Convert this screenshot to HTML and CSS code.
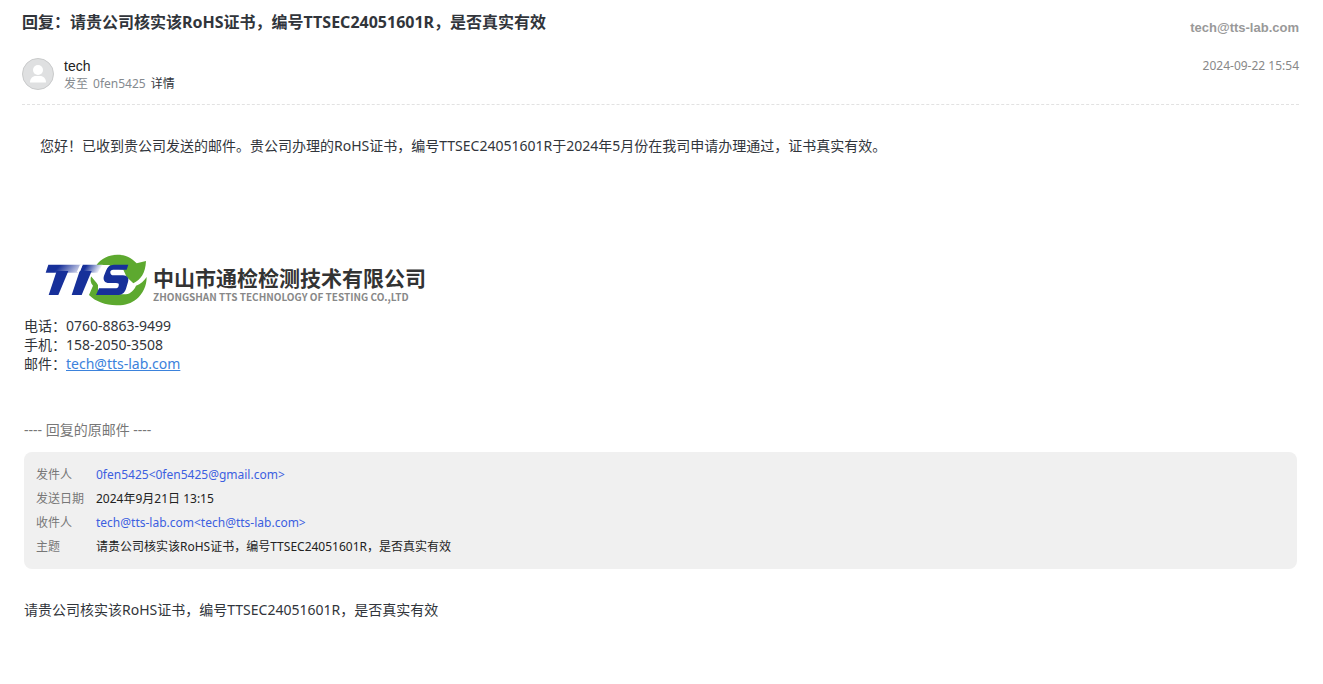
FILE: index.html
```html
<!DOCTYPE html>
<html lang="zh-CN">
<head>
    <meta charset="utf-8">
    <title>回复：请贵公司核实该RoHS证书</title>
    <link rel="stylesheet" href="styles.css">
</head>
<body>
    <!-- 邮件头 -->
    <header class="mail-header">
        <div class="title-row">
            <h1 class="subject">回复：请贵公司核实该RoHS证书，编号TTSEC24051601R，是否真实有效</h1>
            <span class="account">tech@tts-lab.com</span>
        </div>
        <div class="sender-row">
            <svg class="avatar" viewBox="0 0 32 32" aria-hidden="true">
                <circle cx="16" cy="16" r="15.5" fill="#dfe0e1" stroke="#c9cacb"/>
                <circle cx="16" cy="12" r="5" fill="#fff"/>
                <path d="M8 24.5c0-4 2.500-6.500 6-6.500h4c3.500 0 6 2.500 6 6.500z" fill="#fff"/>
            </svg>
            <div class="sender">
                <div class="sender-name">tech</div>
                <div class="receiver">
                    <span>发至</span>
                    <span>0fen5425</span>
                    <button type="button" class="detail">详情</button>
                </div>
            </div>
            <time class="date">2024-09-22 15:54</time>
        </div>
    </header>

    <main class="mail-body">
        <p class="reply">您好！已收到贵公司发送的邮件。贵公司办理的RoHS证书，编号TTSEC24051601R于2024年5月份在我司申请办理通过，证书真实有效。</p>

        <!-- 签名 -->
        <div class="signature">
            <div class="company">
                <svg class="logo" viewBox="45 24 306 168" aria-hidden="true">
                    <defs>
                        <linearGradient id="bar1" x1="0" y1="0" x2="1" y2="0.2">
                            <stop offset="0.400" stop-color="#17309a"/>
                            <stop offset="1" stop-color="#c3c8e4"/>
                        </linearGradient>
                        <linearGradient id="bar2" x1="0" y1="0" x2="1" y2="0.2">
                            <stop offset="0.300" stop-color="#17309a"/>
                            <stop offset="1" stop-color="#fff"/>
                        </linearGradient>
                    </defs>
                    <!-- 绿色圆环 -->
                    <g fill="#5da92f">
                        <path d="M198 62C214 39 237 29 262 29c25 0 43 9 58 26l28-7c-1 19-5 32-11 43-7 11-16 18-27 24l-20-19-10-22z"/>
                        <path d="M184 92l20 22 0 34h84c14-2 24-12 30-26 14-5 24-14 32-26 0 27-11 50-30 66-17 14-38 20-61 19-33-1-62-11-82-31l12-28c-8-9-9-20-5-30z"/>
                    </g>
                    <path d="M188 60h52l-15 24c-4 9-3 17 2 24h14l-10 20h-22l-9-14-22-26z" fill="#fff"/>
                    <!-- TTS -->
                    <path d="M55 59h99l-11 24H47z" fill="url(#bar1)"/>
                    <path d="M80 78h35l-30 72H56z" fill="#17309a"/>
                    <path d="M158 59h60l-15 24h-54z" fill="url(#bar2)"/>
                    <path d="M149 78h36l-30 72h-30z" fill="#17309a"/>
                    <path d="M295 59l-5 15h-40c-7 0-10 4-9 9 1 6 4 8 10 8h28c13 0 19 9 15 20l-6 20c-4 13-13 19-26 19h-64l9-20h48c7 0 10-2 11-8 2-6-1-8-8-8h-20c-14 0-20-9-16-22l6-15c4-12 12-18 24-18z" fill="#17309a"/>
                    <path d="M150 59h8l-11 23h-7z" fill="#fff"/>
                </svg>
                <div class="company-text">
                    <div class="company-name">中山市通检检测技术有限公司</div>
                    <div class="company-en">ZHONGSHAN TTS TECHNOLOGY OF TESTING CO.,LTD</div>
                </div>
            </div>
            <div>电话：0760-8863-9499</div>
            <div>手机：158-2050-3508</div>
            <div>邮件：<a class="mail-link" href="mailto:tech@tts-lab.com">tech@tts-lab.com</a></div>
        </div>

        <!-- 原邮件 -->
        <div class="divider">---- 回复的原邮件 ----</div>
        <table class="origin">
            <tr>
                <th scope="row">发件人</th>
                <td><a href="mailto:0fen5425@gmail.com">0fen5425&lt;0fen5425@gmail.com&gt;</a></td>
            </tr>
            <tr>
                <th scope="row">发送日期</th>
                <td>2024年9月21日 13:15</td>
            </tr>
            <tr>
                <th scope="row">收件人</th>
                <td><a href="mailto:tech@tts-lab.com">tech@tts-lab.com&lt;tech@tts-lab.com&gt;</a></td>
            </tr>
            <tr>
                <th scope="row">主题</th>
                <td>请贵公司核实该RoHS证书，编号TTSEC24051601R，是否真实有效</td>
            </tr>
        </table>
        <p class="origin-text">请贵公司核实该RoHS证书，编号TTSEC24051601R，是否真实有效</p>
    </main>
</body>
</html>
```

FILE: styles.css
```css
body {
    margin: 0;
    padding: 8px 24px 24px 22px;
    background: #fff;
    color: #31353b;
    font-family: "Noto Sans", "Noto Sans CJK SC", sans-serif;
    font-size: 14px;
    line-height: 20px;
}

.mail-header {
    border-bottom: 1px dashed #e2e2e2;
    padding-bottom: 11px;
}

.title-row {
    display: flex;
    justify-content: space-between;
    align-items: flex-start;
}

.subject {
    margin: 0;
    font-size: 16px;
    line-height: 28px;
    font-weight: bold;
}

.account {
    padding-top: 10px;
    color: #999;
    font: bold 13px/20px "Liberation Sans", Arial, sans-serif;
}

.sender-row {
    display: flex;
    align-items: flex-start;
    margin-top: 19px;
}

.avatar {
    width: 32px;
    height: 32px;
    margin: 1px 10px 0 0;
}

.sender {
    flex: 1;
    line-height: 18px;
}

.sender-name {
    font-family: "Liberation Sans", Arial, sans-serif;
    font-size: 14px;
    color: #222;
}

.receiver {
    display: flex;
    gap: 5px;
    font-size: 12px;
    color: #858a8f;
}

.detail {
    padding: 0;
    border: 0;
    background: none;
    font: inherit;
    color: #31353b;
    cursor: pointer;
}

.date {
    font-size: 12px;
    line-height: 18px;
    color: #888;
}

.mail-body {
    padding: 0 2px;
}

.reply {
    margin: 0;
    padding: 31px 16px 0;
}

.signature {
    margin-top: 97px;
    line-height: 19px;
}

.company {
    display: flex;
    align-items: center;
    gap: 6px;
    padding-left: 21px;
    margin-bottom: 7px;
}

.logo {
    width: 102px;
    height: 56px;
}

.company-text {
    padding-top: 8px;
    font-family: "Noto Sans CJK SC", sans-serif;
    font-weight: bold;
    white-space: nowrap;
}

.company-name {
    font-size: 21px;
    line-height: 23px;
    color: #333;
}

.company-en {
    font-size: 10px;
    line-height: 16px;
    color: #888;
}

.mail-link {
    color: #3b82dc;
}

.divider {
    margin-top: 47px;
    color: #777;
}

.origin {
    width: 100%;
    margin-top: 12px;
    padding: 11px 12px 10px;
    border-spacing: 0;
    border-radius: 8px;
    background: #f0f0f0;
    font-size: 12px;
    line-height: 24px;
    color: #222;
}

.origin th,
.origin td {
    padding: 0;
}

.origin th {
    width: 60px;
    font-weight: normal;
    text-align: left;
    color: #777;
}

.origin a {
    color: #3c5fe0;
    text-decoration: none;
}

.origin-text {
    margin: 31px 0 0;
}
```
